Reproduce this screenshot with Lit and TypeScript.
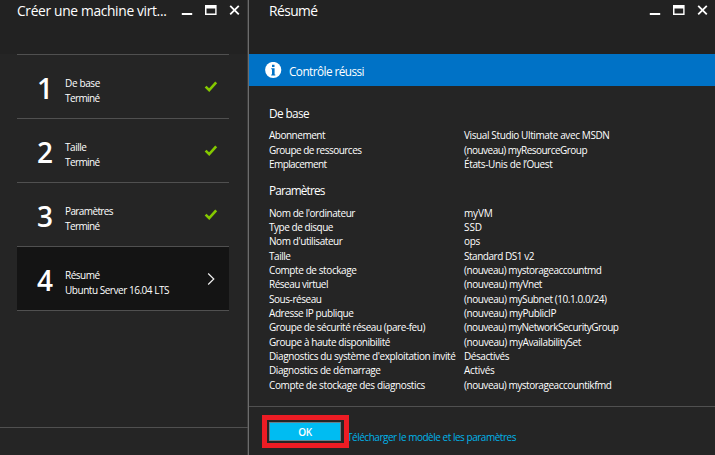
import { LitElement, html, css, svg } from "lit";
import { customElement, property } from "lit/decorators.js";

/** A line of text whose tracking is adjusted so that it spans `span` pixels. */
@customElement("text-run")
class TextRun extends LitElement {
  @property({ type: Number }) span = 0;
  @property() text = "";

  static styles = css`
    :host { display: block; white-space: pre; }
    .run { display: inline-block; }
  `;

  render() {
    return html`<span class="run">${this.text}</span>`;
  }

  updated() {
    const run = this.renderRoot.querySelector<HTMLElement>(".run")!;
    run.style.letterSpacing = "0px";
    const natural = run.getBoundingClientRect().width;
    run.style.letterSpacing = `${((this.span - natural) / this.text.length).toFixed(3)}px`;
  }
}

type Row = [string, number, string, number];

const STEPS = [
  { n: 1, title: "De base", tw: 35, state: "Terminé", sw: 34.5, done: true },
  { n: 2, title: "Taille", tw: 21.5, state: "Terminé", sw: 34.5, done: true },
  { n: 3, title: "Paramètres", tw: 48, state: "Terminé", sw: 34.5, done: true },
  { n: 4, title: "Résumé", tw: 34.5, state: "Ubuntu Server 16.04 LTS", sw: 104, done: false },
];

const BASICS: Row[] = [
  ["Abonnement", 56, "Visual Studio Ultimate avec MSDN", 145.5],
  ["Groupe de ressources", 92.5, "(nouveau) myResourceGroup", 123],
  ["Emplacement", 57.5, "États-Unis de l’Ouest", 88.5],
];

const SETTINGS: Row[] = [
  ["Nom de l'ordinateur", 86, "myVM", 28.5],
  ["Type de disque", 64, "SSD", 18],
  ["Nom d'utilisateur", 73.5, "ops", 16],
  ["Taille", 21.5, "Standard DS1 v2", 70],
  ["Compte de stockage", 87.5, "(nouveau) mystorageaccountmd", 137.5],
  ["Réseau virtuel", 59, "(nouveau) myVnet", 78],
  ["Sous-réseau", 52.5, "(nouveau) mySubnet (10.1.0.0/24)", 142.5],
  ["Adresse IP publique", 84.5, "(nouveau) myPublicIP", 92],
  ["Groupe de sécurité réseau (pare-feu)", 156, "(nouveau) myNetworkSecurityGroup", 154.5],
  ["Groupe à haute disponibilité", 121, "(nouveau) myAvailabilitySet", 117],
  ["Diagnostics du système d'exploitation invité", 186.5, "Désactivés", 45],
  ["Diagnostics de démarrage", 111.5, "Activés", 30.5],
  ["Compte de stockage des diagnostics", 156, "(nouveau) mystorageaccountikfmd", 147.5],
];

const controls = html`<svg class="controls" width="60" height="12" viewBox="0 0 60 12">
  ${svg`
    <rect x="0.8" y="8" width="10.4" height="2" fill="#fff" />
    <path fill="#fff" fill-rule="evenodd" d="M24 0H35.6V10H24ZM25.5 3.4V8.6H34.2V3.4Z" />
    <path d="M49.2 0.8L57.8 9.4M57.8 0.8L49.2 9.4" stroke="#fff" stroke-width="1.8" />
  `}
</svg>`;

const check = html`<svg class="mark" width="14" height="12" viewBox="0 0 14 12">
  <path d="M1.6 5.6L5.2 9.2L12.2 1.3" fill="none" stroke="#84c800" stroke-width="2.6" />
</svg>`;

const chevron = html`<svg class="mark" width="14" height="12" viewBox="0 0 14 12">
  <path d="M4.2 0.5L9.8 6L4.2 11.5" fill="none" stroke="#f0f0f0" stroke-width="1.2" />
</svg>`;

const info = html`<svg class="info" width="17" height="17" viewBox="0 0 17 17">
  <circle cx="8.2" cy="8" r="8.1" fill="#fff" />
  <path d="M7 2.8H9.5V5H7ZM6.2 6.3H9.6V12.6H10.3V13.6H6.2V12.6H7V7.3H6.2Z" fill="#0072c6" />
</svg>`;

@customElement("app-root")
class AppRoot extends LitElement {
  static styles = css`
    :host {
      display: grid;
      grid-template-columns: 249px 1fr;
      width: 715px;
      height: 455px;
      overflow: hidden;
      background: #252525;
      color: #fff;
      font: 460 10px/14.35px "Open Sans", "Noto Sans", sans-serif;
    }
    .blade { display: flex; flex-direction: column; box-sizing: border-box; height: 455px; min-width: 0; }
    .journey { border-right: 1px solid #6c6c6c; box-shadow: inset -1px 0 #3b3b3b; }
    header {
      box-sizing: border-box;
      display: flex;
      justify-content: space-between;
      height: 54px;
      flex: none;
      background: #222;
      font-size: 13.8px;
      font-weight: 400;
      line-height: 22px;
    }
    .journey header { padding: 0 6px 0 17px; margin-right: 1px; }
    .summary header { padding: 0 6px 0 20px; }
    .controls { margin-top: 5px; }
    .steps { margin: 0 19px 0 17px; border-bottom: 1px solid #505050; }
    .step {
      box-sizing: border-box;
      height: 64px;
      border-top: 1px solid #505050;
      display: grid;
      grid-template-columns: 48px 1fr 14px;
      padding-right: 11px;
    }
    .current { background: #141414; }
    .number { font-size: 28px; font-weight: 600; line-height: 64px; padding: 1px 0 0 20px; }
    .lines { padding-top: 21px; line-height: 15px; }
    .mark { margin-top: 26px; }
    .foot { margin-top: auto; box-sizing: border-box; border-top: 1px solid #505050; flex: none; }
    .journey .foot { height: 28px; }
    .banner {
      display: flex;
      height: 32px;
      flex: none;
      background: #0072c6;
      padding-left: 16px;
      font-size: 11.8px;
      line-height: 34px;
    }
    .info { margin: 8px 7px 0 0; }
    .details { padding-left: 20px; }
    h2 { margin: 0; font-size: 11.8px; font-weight: 400; line-height: 16px; }
    .basics { padding-top: 19px; }
    .settings { padding-top: 11px; }
    .rows { padding-top: 7.3px; }
    .row { display: grid; grid-template-columns: 195px 1fr; height: 14.35px; }
    .summary .foot { height: 49px; display: flex; padding-left: 13px; }
    .highlight {
      box-sizing: border-box;
      width: 87px;
      height: 33px;
      margin-top: 8px;
      flex: none;
      border: 5px solid #ed1c24;
      padding: 2px;
      position: relative;
      z-index: 1;
    }
    button {
      box-sizing: border-box;
      display: flex;
      justify-content: center;
      width: 72px;
      height: 19px;
      padding: 0;
      border: 1px solid #68808a;
      background: #00bcf2;
      color: #fff;
      font: 600 10px/18px "Open Sans", sans-serif;
    }
    a { color: #00b4ea; margin: 23px 0 0 -2px; }
  `;

  private rows(rows: Row[]) {
    return html`<div class="rows">
      ${rows.map(
        ([label, lw, value, vw]) => html`<div class="row">
          <text-run .text=${label} .span=${lw}></text-run>
          <text-run .text=${value} .span=${vw}></text-run>
        </div>`
      )}
    </div>`;
  }

  render() {
    return html`
      <section class="blade journey">
        <header><text-run .text=${"Créer une machine virt..."} .span=${149.5}></text-run>${controls}</header>
        <div class="steps">
          ${STEPS.map(
            (s) => html`<div class="step ${s.done ? "" : "current"}">
              <div class="number">${s.n}</div>
              <div class="lines">
                <text-run .text=${s.title} .span=${s.tw}></text-run>
                <text-run .text=${s.state} .span=${s.sw}></text-run>
              </div>
              ${s.done ? check : chevron}
            </div>`
          )}
        </div>
        <div class="foot"></div>
      </section>
      <section class="blade summary">
        <header><text-run .text=${"Résumé"} .span=${48.5}></text-run>${controls}</header>
        <div class="banner">${info}<text-run .text=${"Contrôle réussi"} .span=${75}></text-run></div>
        <div class="details">
          <div class="basics">
            <h2><text-run .text=${"De base"} .span=${40}></text-run></h2>
            ${this.rows(BASICS)}
          </div>
          <div class="settings">
            <h2><text-run .text=${"Paramètres"} .span=${55.5}></text-run></h2>
            ${this.rows(SETTINGS)}
          </div>
        </div>
        <div class="foot">
          <div class="highlight"><button><text-run .text=${"OK"} .span=${13.5}></text-run></button></div>
          <a><text-run .text=${"Télécharger le modèle et les paramètres"} .span=${169}></text-run></a>
        </div>
      </section>
    `;
  }
}
